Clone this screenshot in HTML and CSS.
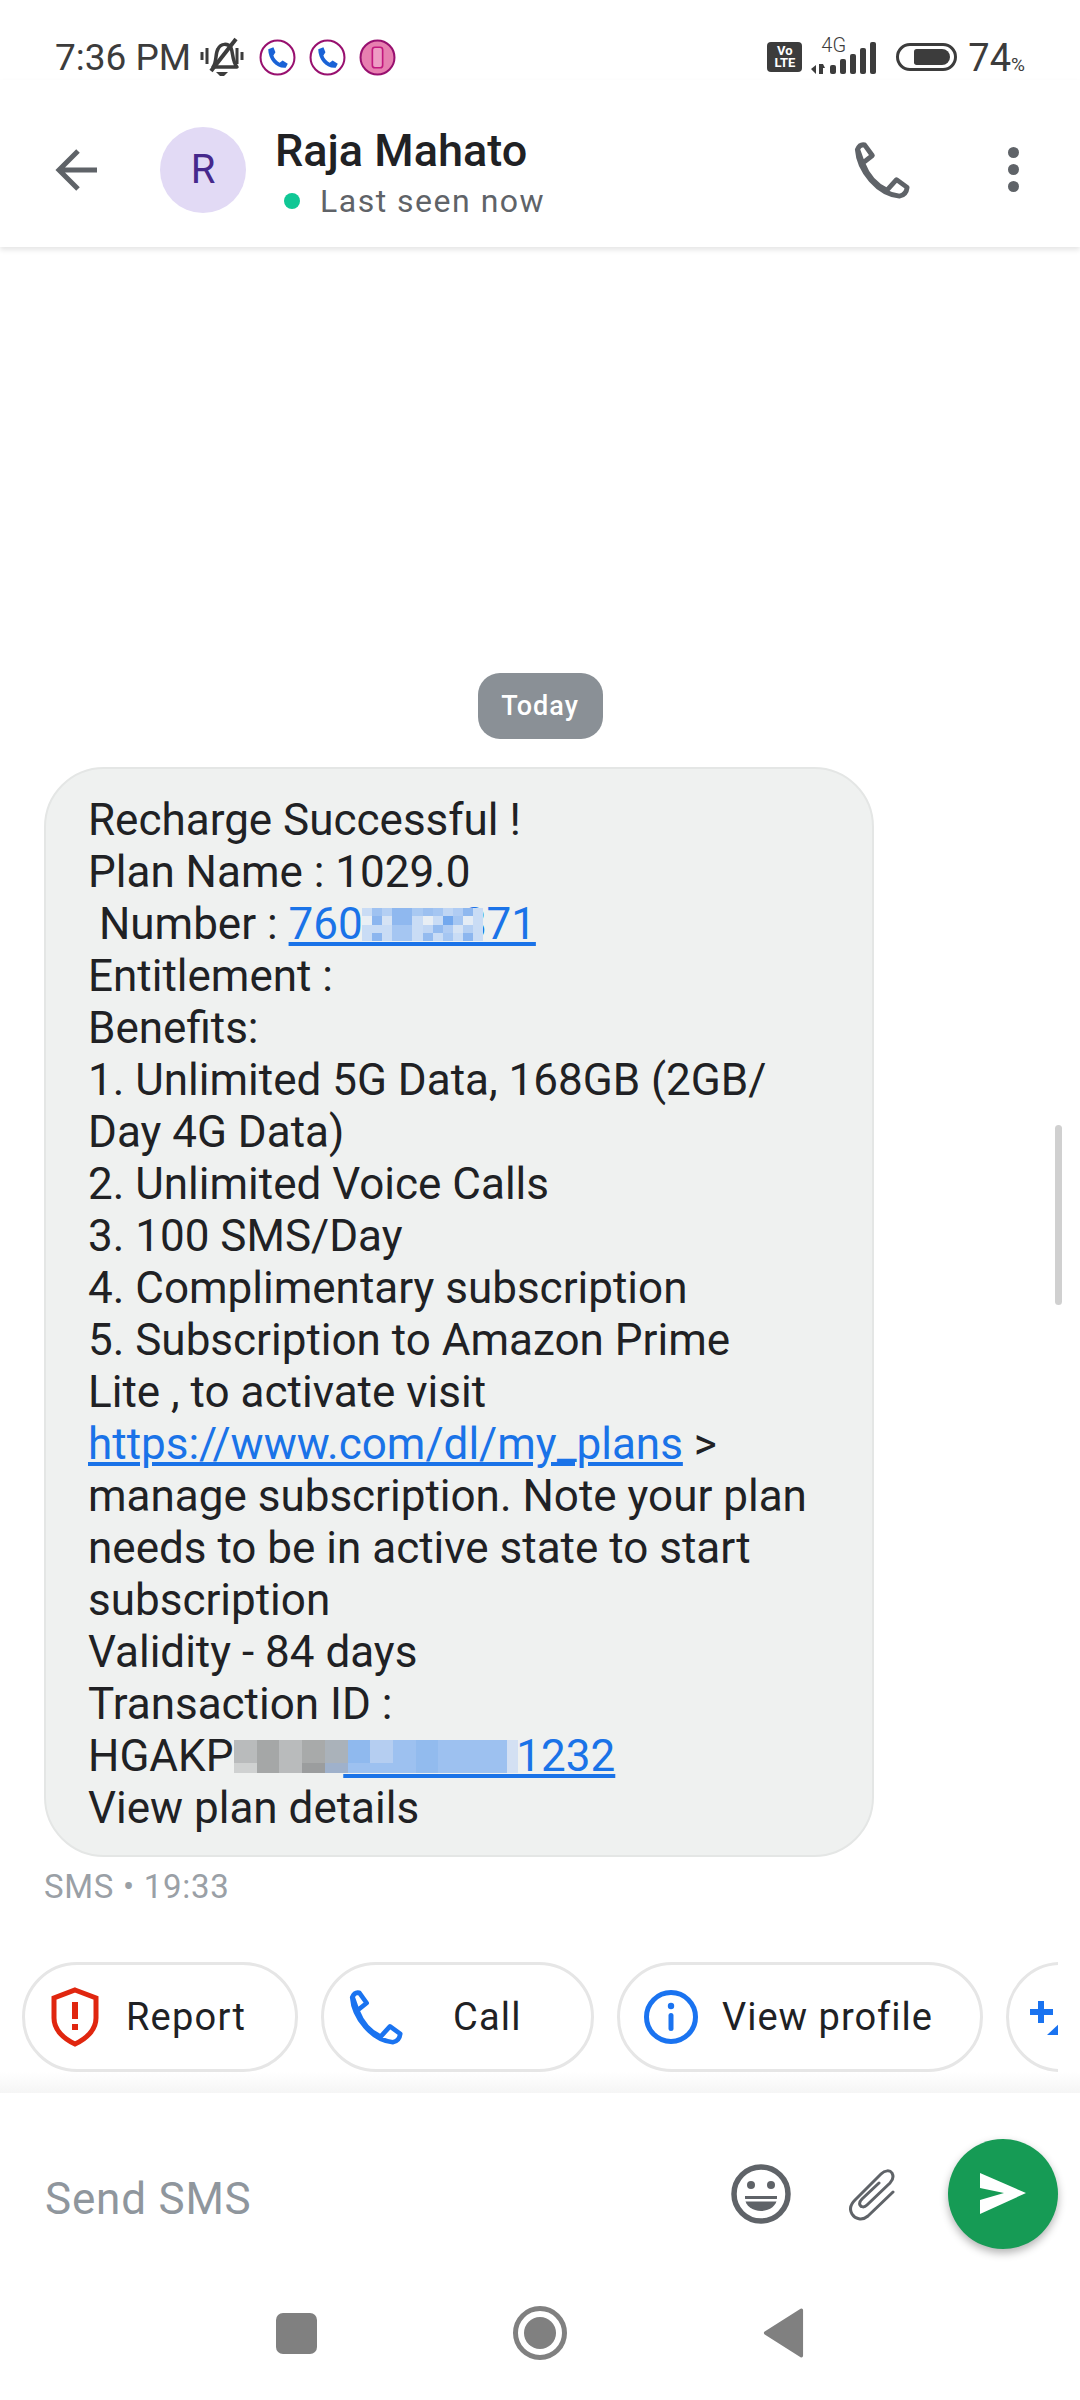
FILE: index.html
```html
<!DOCTYPE html>
<html lang="en">

<head>
    <meta charset="UTF-8">
    <meta name="viewport" content="width=device-width, initial-scale=1.0">
    <title>Raja Mahato</title>
    <link rel="stylesheet" href="styles.css">
</head>

<body>
    <svg class="defs" width="0" height="0">
        <symbol id="phone" viewBox="0 0 60 60">
            <path d="M10 23 L20 15 L12 4 Q7 3 4.5 9 C6 31 26 55 48 57 Q55 56 56 48 L45 40 L35 51 C24 46 15 36 10 23 L5 9" fill="none" stroke="currentColor" stroke-width="5" stroke-linejoin="round" />
        </symbol>
        <symbol id="callBadge" viewBox="0 0 36 36">
            <circle cx="18" cy="18" r="16.5" fill="#fff" stroke="#98106f" stroke-width="2" />
            <path d="M9 10 L14 8 L16 13 L14 16 C15 19 17 21 20 23 L23 21 L28 24 L26 28 C17 29 9 20 9 10 Z" fill="#1a62d6" />
        </symbol>
    </svg>

    <div class="phone">
        <div class="statusbar">
            <div class="status-left">
                <span class="time">7:36 PM</span>
                <svg class="mute" viewBox="0 0 44 40">
                    <path d="M13 30 C17 25 15 17 18 12 C21 6 28 6 31 11 C33 15 32 24 37 30 Z" fill="none" stroke="#3c3c3c" stroke-width="3.5" stroke-linejoin="round" />
                    <path d="M16 35 H28 L24 39 H20 Z" fill="#3c3c3c" />
                    <path d="M2 15 V23 M7 11 V27 M37 11 V27 M42 15 V23" stroke="#3c3c3c" stroke-width="3" />
                    <path d="M11 34 L36 2" stroke="#3c3c3c" stroke-width="4" />
                </svg>
                <svg class="badge"><use href="#callBadge" /></svg>
                <svg class="badge"><use href="#callBadge" /></svg>
                <svg class="badge" viewBox="0 0 36 36">
                    <circle cx="18" cy="18" r="16.5" fill="#e77fb0" stroke="#98106f" stroke-width="2" />
                    <rect x="13" y="8" width="10" height="20" rx="2.5" fill="#ee9cc4" stroke="#c2187e" stroke-width="1.6" />
                </svg>
            </div>
            <div class="status-right">
                <div class="volte">Vo<br>LTE</div>
                <div class="signal">
                    <span class="four-g">4G</span>
                    <svg class="bars" viewBox="0 0 66 32">
                        <path d="M0 27 L5 23 V32 Z M8 22 H12 L14 26 H12 V32 H8 Z" fill="#3c3c3c" />
                        <rect x="19" y="23" width="6" height="9" rx="2" fill="#3c3c3c" />
                        <rect x="29" y="17" width="6" height="15" rx="2" fill="#3c3c3c" />
                        <rect x="39" y="12" width="6" height="20" rx="2" fill="#3c3c3c" />
                        <rect x="49" y="6" width="6" height="26" rx="2" fill="#3c3c3c" />
                        <rect x="59" y="0" width="6" height="32" rx="2" fill="#3c3c3c" />
                    </svg>
                </div>
                <div class="battery"><div class="battery-level"></div></div>
                <div class="percent">74<small>%</small></div>
            </div>
        </div>

        <header class="topbar">
            <svg class="back" viewBox="0 0 44 44">
                <path d="M42 22 H5 M23 3 L4 22 L23 41" fill="none" stroke="#5f6368" stroke-width="5" />
            </svg>
            <div class="avatar">R</div>
            <div class="contact">
                <div class="contact-name">Raja Mahato</div>
                <div class="contact-seen"><span class="dot"></span>Last seen now</div>
            </div>
            <svg class="top-call"><use href="#phone" /></svg>
            <div class="more"><span></span><span></span><span></span></div>
        </header>

        <main class="chat">
            <div class="day">Today</div>
            <div class="bubble">
                Recharge Successful !<br>
                Plan Name : 1029.0<br>
                <span class="masked">&nbsp;Number : <a href="#" class="link">760&#8199;&#8199;&#8199;&#8199;871</a>
                    <svg class="mask mask-number" viewBox="0 0 12 4" preserveAspectRatio="none" shape-rendering="crispEdges">
                        <rect width="12" height="4" fill="#c9dcf5" />
                        <rect x="1" width="1" height="1" fill="#9fc2f1" />
                        <rect x="2" width="1" height="1" fill="#b4cff3" />
                        <rect x="3" width="2" height="2" fill="#8fb8ef" />
                        <rect x="5" width="1" height="1" fill="#a9c9f2" />
                        <rect x="6" width="1" height="1" fill="#9cc0f0" />
                        <rect x="7" width="1" height="1" fill="#a5c6f2" />
                        <rect x="8" width="1" height="1" fill="#c0d6f4" />
                        <rect x="9" width="1" height="1" fill="#b0ccf3" />
                        <rect x="10" width="1" height="1" fill="#8fb8ef" />
                        <rect y="1" width="1" height="1" fill="#e9eff5" />
                        <rect x="1" y="1" width="1" height="1" fill="#8cb6ef" />
                        <rect x="2" y="1" width="1" height="1" fill="#d6e3f4" />
                        <rect x="6" y="1" width="1" height="1" fill="#e8eef4" />
                        <rect x="7" y="1" width="1" height="1" fill="#c9dcf5" />
                        <rect x="8" y="1" width="1" height="1" fill="#73a8ee" />
                        <rect x="9" y="1" width="1" height="1" fill="#a5c6f2" />
                        <rect x="10" y="1" width="1" height="1" fill="#e4ecf5" />
                        <rect x="3" y="2" width="2" height="1" fill="#a5c6f2" />
                        <rect x="6" y="2" width="1" height="1" fill="#c0d6f4" />
                        <rect x="7" y="2" width="1" height="1" fill="#94bbef" />
                        <rect x="8" y="2" width="1" height="1" fill="#b0ccf3" />
                        <rect x="9" y="2" width="1" height="1" fill="#d6e3f4" />
                        <rect x="10" y="2" width="1" height="1" fill="#b4cff3" />
                        <rect x="1" y="3" width="1" height="1" fill="#8cb6ef" />
                        <rect x="3" y="3" width="2" height="1" fill="#a5c6f2" />
                        <rect x="6" y="3" width="1" height="1" fill="#94bbef" />
                        <rect x="8" y="3" width="1" height="1" fill="#a5c6f2" />
                        <rect x="10" y="3" width="1" height="1" fill="#8cb6ef" />
                    </svg>
                </span><br>
                Entitlement :<br>
                Benefits:<br>
                1. Unlimited 5G Data, 168GB (2GB/<br>
                Day 4G Data)<br>
                2. Unlimited Voice Calls<br>
                3. 100 SMS/Day<br>
                4. Complimentary subscription<br>
                5. Subscription to Amazon Prime<br>
                Lite , to activate visit<br>
                <a href="#" class="link">https://www.com/dl/my_plans</a> &gt;<br>
                manage subscription. Note your plan<br>
                needs to be in active state to start<br>
                subscription<br>
                Validity - 84 days<br>
                Transaction ID :<br>
                <span class="masked">HGAKP&#8199;&#8199;&#8199;&#8199;&nbsp;<a href="#" class="link">&#8199;&#8199;&#8199;&#8199;&#8199;&#8199;&#8199;1232</a>
                    <svg class="mask mask-txn" viewBox="0 0 25 2" preserveAspectRatio="none" shape-rendering="crispEdges">
                        <rect width="25" height="2" fill="#9dc1f0" />
                        <rect width="10" height="2" fill="#b9bbbc" />
                        <rect x="2" width="2" height="2" fill="#a5a7a7" />
                        <rect x="6" width="2" height="2" fill="#a8aaaa" />
                        <rect x="8" width="2" height="2" fill="#aab2ba" />
                        <rect y="1.4" width="2" height="0.6" fill="#cfd1d1" />
                        <rect x="6" y="1.4" width="2" height="0.6" fill="#9b9d9e" />
                        <rect x="8" y="1.4" width="2" height="0.6" fill="#9fb1cb" />
                        <rect x="10" width="2" height="1.4" fill="#8fb9ee" />
                        <rect x="12" width="2" height="1.4" fill="#b5cef1" />
                        <rect x="16" width="2" height="2" fill="#92bbee" />
                        <rect x="24" width="1" height="2" fill="#d3e0f3" />
                    </svg>
                </span><br>
                View plan details
            </div>
            <div class="meta">SMS • 19:33</div>
            <div class="scrollbar"></div>
        </main>

        <div class="actions">
            <div class="action action-report">
                <svg class="action-icon shield" viewBox="0 0 48 60">
                    <path d="M24 3 L45 11 V31 C45 43 35 52 24 57 C13 52 3 43 3 31 V11 Z" fill="none" stroke="#e0260f" stroke-width="5" />
                    <rect x="21" y="15" width="6" height="17" fill="#e0260f" />
                    <rect x="21" y="37" width="6" height="6" fill="#e0260f" />
                </svg>
                <span>Report</span>
            </div>
            <div class="action action-call">
                <svg class="action-icon chip-phone"><use href="#phone" /></svg>
                <span>Call</span>
            </div>
            <div class="action action-profile">
                <svg class="action-icon info" viewBox="0 0 54 54">
                    <circle cx="27" cy="27" r="24.5" fill="none" stroke="#1a73f0" stroke-width="5" />
                    <circle cx="27" cy="16" r="3.2" fill="#1a73f0" />
                    <rect x="24.5" y="23" width="5" height="18" rx="2.5" fill="#1a73f0" />
                </svg>
                <span>View profile</span>
            </div>
            <div class="action action-more">
                <svg class="plus" viewBox="0 0 30 40">
                    <path d="M11 4 V26 M0 15 H23" stroke="#1a73f0" stroke-width="6" fill="none" />
                    <path d="M17 38 L30 26 V38 Z" fill="#1a73f0" />
                </svg>
            </div>
        </div>
        <div class="fade"></div>

        <div class="composer">
            <div class="placeholder">Send SMS</div>
            <svg class="emoji" viewBox="0 0 60 60">
                <circle cx="30" cy="30" r="27" fill="none" stroke="#5f6368" stroke-width="5.5" />
                <circle cx="20" cy="21" r="4" fill="#5f6368" />
                <circle cx="40" cy="21" r="4" fill="#5f6368" />
                <path d="M14 32 H46 V34 C46 42 38 47 30 47 C22 47 14 42 14 34 Z" fill="#5f6368" />
                <rect x="14" y="35" width="32" height="2.5" fill="#fff" />
            </svg>
            <svg class="clip" viewBox="0 0 46 54">
                <path d="M44 25 L19 49 C13 54 6 52 3 47 C0 42 2 37 6 33 L32 7 C36 3 41 3 43 6 C45 10 44 13 41 16 L18 38 C15 41 12 40 11 38 C10 36 11 34 13 32 L30 16" fill="none" stroke="#5f6368" stroke-width="3" stroke-linecap="round" />
            </svg>
            <div class="send">
                <svg class="send-icon" viewBox="0 0 46 42">
                    <path d="M0 0 L46 20 L0 41 V27 L24 20 L0 15 Z" fill="#fff" />
                </svg>
            </div>
        </div>

        <div class="navbar">
            <div class="nav-square"></div>
            <div class="nav-circle"><div class="nav-circle-core"></div></div>
            <svg class="nav-back" viewBox="0 0 37 46">
                <path d="M35 2 V44 L2 23 Z" fill="#808080" stroke="#808080" stroke-width="3" stroke-linejoin="round" />
            </svg>
        </div>
    </div>
</body>

</html>
```

FILE: styles.css
```css
* {
    box-sizing: border-box;
}

body {
    margin: 0;
    font-family: Roboto, "Liberation Sans", sans-serif;
    background-color: #fff;
    color: #202124;
}

.defs {
    position: absolute;
}

.phone {
    width: 1080px;
    height: 2400px;
    display: flex;
    flex-direction: column;
    overflow: hidden;
}

/* Status bar */
.statusbar {
    height: 80px;
    flex: none;
    padding: 0 55px 0 55px;
    display: flex;
    justify-content: space-between;
    align-items: center;
    color: #3c3c3c;
}

.status-left,
.status-right {
    display: flex;
    align-items: center;
    padding-top: 34px;
    height: 80px;
}

.time {
    font-size: 37px;
}

.mute {
    width: 44px;
    height: 40px;
    margin-left: 9px;
}

.badge {
    width: 37px;
    height: 37px;
    margin-left: 13px;
}

.mute + .badge {
    margin-left: 15px;
}

.volte {
    width: 35px;
    height: 30px;
    background-color: #3c3c3c;
    border-radius: 4px;
    color: #fff;
    font-size: 13px;
    font-weight: 700;
    line-height: 12px;
    text-align: center;
    padding-top: 3px;
}

.signal {
    width: 66px;
    height: 34px;
    margin-left: 9px;
    position: relative;
}

.four-g {
    position: absolute;
    left: 10px;
    top: -7px;
    font-size: 20px;
    font-weight: 300;
}

.bars {
    position: absolute;
    left: 0;
    top: 2px;
    width: 66px;
    height: 32px;
}

.battery {
    width: 61px;
    height: 28px;
    margin-left: 19px;
    border: 3px solid #3c3c3c;
    border-radius: 14px;
    padding: 3px 4px 3px 15px;
}

.battery-level {
    width: 100%;
    height: 100%;
    background-color: #3c3c3c;
    border-radius: 3px 9px 9px 3px;
}

.percent {
    margin-left: 11px;
    padding-top: 2px;
    font-size: 38px;
    line-height: 1;
}

.percent small {
    font-size: 19px;
}

/* Top bar */
.topbar {
    height: 167px;
    flex: none;
    display: flex;
    align-items: center;
    padding: 12px 0 0 55px;
    box-shadow: 0 3px 5px rgba(0, 0, 0, 0.1);
    position: relative;
}

.back {
    width: 44px;
    height: 44px;
}

.avatar {
    width: 86px;
    height: 86px;
    margin-left: 61px;
    border-radius: 50%;
    background-color: #e2daf5;
    color: #46288c;
    font-size: 40px;
    display: flex;
    align-items: center;
    justify-content: center;
}

.contact {
    margin: 7px 0 0 29px;
    width: 560px;
}

.contact-name {
    font-size: 45px;
    font-weight: 500;
    line-height: 50px;
}

.contact-seen {
    margin-top: 5px;
    font-size: 32px;
    line-height: 40px;
    letter-spacing: 1.5px;
    color: #5f6368;
    display: flex;
    align-items: center;
}

.dot {
    width: 16px;
    height: 16px;
    border-radius: 50%;
    background-color: #10c795;
    margin-left: 9px;
    margin-right: 20px;
}

.top-call {
    width: 58px;
    height: 58px;
    margin-left: 18px;
    color: #5f6368;
}

.more {
    margin-left: 97px;
    display: flex;
    flex-direction: column;
    gap: 6px;
}

.more span {
    width: 11px;
    height: 11px;
    border-radius: 50%;
    background-color: #5f6368;
}

/* Chat */
.chat {
    flex: 1;
    display: flex;
    flex-direction: column;
    justify-content: flex-end;
    position: relative;
    padding: 0 0 57px 44px;
}

.day {
    align-self: center;
    width: 125px;
    height: 66px;
    margin-left: -44px;
    margin-bottom: 28px;
    background-color: #8a9096;
    border-radius: 22px;
    color: #fff;
    font-size: 27px;
    font-weight: 500;
    letter-spacing: 1px;
    display: flex;
    align-items: center;
    justify-content: center;
}

.bubble {
    width: 830px;
    height: 1090px;
    padding: 25px 20px 0 42px;
    background-color: #eff1f0;
    border: 2px solid #e4e6e5;
    border-radius: 60px;
    font-size: 44px;
    line-height: 52px;
}

.link {
    color: #1a73e8;
    text-decoration: underline;
    text-underline-offset: 3px;
}

.masked {
    position: relative;
}

.mask {
    position: absolute;
}

.mask-number {
    left: 274px;
    top: 10px;
    width: 121px;
    height: 33px;
}

.mask-txn {
    left: 146px;
    top: 10px;
    width: 284px;
    height: 33px;
}

.meta {
    margin-top: 12px;
    font-size: 33px;
    line-height: 36px;
    letter-spacing: 0.7px;
    color: #9aa0a6;
}

.scrollbar {
    position: absolute;
    right: 18px;
    top: 878px;
    width: 7px;
    height: 180px;
    background-color: #d0d0d0;
    border-radius: 4px;
}

/* Suggestion chips */
.actions {
    height: 110px;
    flex: none;
    width: 1036px;
    margin-left: 22px;
    display: flex;
    gap: 23px;
    overflow: hidden;
}

.action {
    flex: none;
    height: 110px;
    border: 3px solid #e6e6e6;
    border-radius: 55px;
    display: flex;
    align-items: center;
    font-size: 38px;
}

.action span {
    letter-spacing: 1.2px;
}

.action-report {
    width: 276px;
    padding-left: 26px;
    gap: 27px;
}

.action-call {
    width: 273px;
    padding-left: 24px;
    gap: 49px;
}

.action-profile {
    width: 366px;
    padding-left: 24px;
    gap: 24px;
}

.action-profile span {
    letter-spacing: 1px;
}

.action-more {
    width: 120px;
    padding-left: 21px;
}

.action-icon {
    flex: none;
}

.shield {
    width: 48px;
    height: 60px;
}

.chip-phone {
    width: 56px;
    height: 56px;
    color: #1a73f0;
}

.info {
    width: 54px;
    height: 54px;
}

.plus {
    width: 30px;
    height: 40px;
}

.fade {
    height: 21px;
    flex: none;
    background: linear-gradient(#fff, #f5f5f5);
}

/* Composer */
.composer {
    height: 167px;
    flex: none;
    display: flex;
    align-items: center;
    padding: 34px 0 0 45px;
}

.placeholder {
    font-size: 44px;
    letter-spacing: 0.8px;
    color: #8f969d;
    width: 686px;
    padding-top: 10px;
}

.emoji {
    width: 60px;
    height: 60px;
}

.clip {
    width: 46px;
    height: 54px;
    margin-left: 58px;
}

.send {
    width: 110px;
    height: 110px;
    margin-left: 53px;
    border-radius: 50%;
    background-color: #169b55;
    box-shadow: 0 4px 8px rgba(0, 0, 0, 0.3);
    display: flex;
    align-items: center;
    justify-content: center;
}

.send-icon {
    width: 46px;
    height: 42px;
}

/* Nav bar */
.navbar {
    flex: none;
    height: 140px;
    padding: 6px 0 0 276px;
    display: flex;
    align-items: center;
}

.nav-square {
    width: 41px;
    height: 41px;
    border-radius: 7px;
    background-color: #808080;
}

.nav-circle {
    width: 54px;
    height: 54px;
    margin-left: 196px;
    border: 5px solid #808080;
    border-radius: 50%;
    display: flex;
    align-items: center;
    justify-content: center;
}

.nav-circle-core {
    width: 32px;
    height: 32px;
    border-radius: 50%;
    background-color: #808080;
}

.nav-back {
    width: 41px;
    height: 50px;
    margin-left: 196px;
}
```
